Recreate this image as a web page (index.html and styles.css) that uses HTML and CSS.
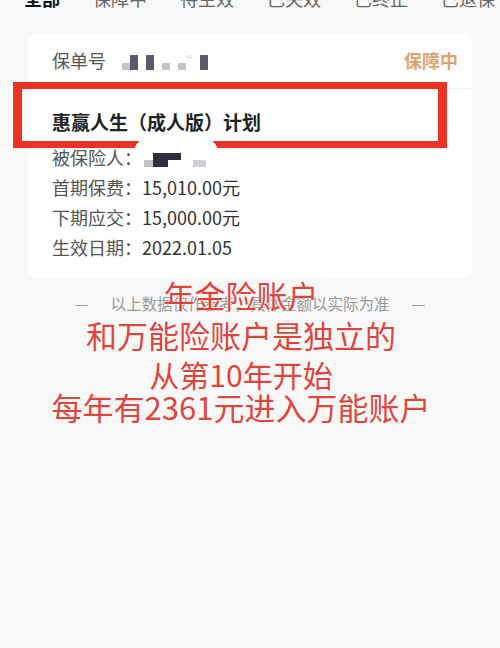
FILE: index.html
```html
<!DOCTYPE html>
<html lang="zh-CN">
<head>
    <meta charset="UTF-8">
    <meta name="viewport" content="width=device-width, initial-scale=1.0">
    <title>我的保单</title>
    <link rel="stylesheet" href="styles.css">
</head>
<body>
    <div class="tabs">
        <span class="tab active">全部</span>
        <span class="tab">保障中</span>
        <span class="tab">待生效</span>
        <span class="tab">已失效</span>
        <span class="tab">已终止</span>
        <span class="tab">已退保</span>
    </div>

    <div class="card">
        <div class="card-head">
            <div class="policy-no">
                <span class="label">保单号</span>
                <span class="mosaic">
                    <i class="px light short"></i>
                    <i class="px dark"></i>
                    <i class="px gap"></i>
                    <i class="px dark"></i>
                    <i class="px gap"></i>
                    <i class="px light short"></i>
                    <i class="px gap"></i>
                    <i class="px light short"></i>
                    <i class="px faint"></i>
                    <i class="px gap"></i>
                    <i class="px dark"></i>
                </span>
            </div>
            <span class="status">保障中</span>
        </div>

        <div class="plan">惠赢人生（成人版）计划</div>

        <div class="rows">
            <div class="row">
                <span class="label">被保险人：</span>
                <span class="mosaic name">
                    <i class="px light short"></i>
                    <i class="px dark mid"></i>
                    <i class="px dark top"></i>
                    <i class="px gap"></i>
                    <i class="px light short wide"></i>
                </span>
            </div>
            <div class="row"><span class="label">首期保费：</span><span class="value">15,010.00元</span></div>
            <div class="row"><span class="label">下期应交：</span><span class="value">15,000.00元</span></div>
            <div class="row"><span class="label">生效日期：</span><span class="value">2022.01.05</span></div>
        </div>
    </div>

    <p class="note"><span>—</span><span>以上数据仅作参考，具体金额以实际为准</span><span>—</span></p>

    <!-- annotations drawn on top of the screenshot -->
    <div class="mark"></div>
    <div class="blob"></div>
    <div class="remark">
        <div>年金险账户</div>
        <div>和万能险账户是独立的</div>
        <div class="third">从第10年开始</div>
        <div class="last">每年有2361元进入万能账户</div>
    </div>
</body>
</html>
```

FILE: styles.css
```css
body {
    margin: 0;
    background: #f8f8f8;
    font-family: "Noto Sans CJK SC", "Noto Sans", sans-serif;
    color: #333;
    position: relative;
    height: 648px;
    overflow: hidden;
}

.tabs {
    display: flex;
    gap: 33px;
    padding-left: 24px;
    margin-top: -14px;
    font-size: 18px;
    line-height: 24px;
    color: #666;
    white-space: nowrap;
}

.tab.active {
    color: #111;
    font-weight: bold;
}

.card {
    margin: 23px 28px 0;
    background: #fff;
    border-radius: 8px;
}

.card-head {
    display: flex;
    justify-content: space-between;
    align-items: center;
    padding: 15px 14px 15px 24px;
    border-bottom: 1px solid #f0f0f0;
    line-height: 25px;
}

.policy-no {
    display: flex;
    align-items: center;
}

.label {
    font-size: 18px;
    color: #555;
}

.status {
    font-size: 18px;
    font-weight: bold;
    color: #e0a36e;
}

.mosaic {
    display: flex;
    align-items: flex-end;
    height: 15px;
    margin-left: 16px;
    margin-top: 3px;
}

.px {
    display: block;
    width: 8px;
    height: 15px;
}

.px.dark { background: #5a5a6a; }
.px.light { background: #c4c4c8; }
.px.faint { background: #ececee; height: 4px; align-self: flex-start; width: 6px; }
.px.gap { width: 8px; }
.px.short { height: 7px; }

.plan {
    padding: 20px 24px 7px;
    font-size: 19px;
    font-weight: bold;
    line-height: 26px;
    color: #222;
}

.rows {
    padding: 0 24px 16px;
}

.row {
    display: flex;
    align-items: center;
    line-height: 30px;
    font-size: 18px;
}

.value {
    color: #333;
}

.mosaic.name {
    position: relative;
    z-index: 1;
    margin-left: 2px;
    height: 14px;
    margin-top: 6px;
}

.mosaic.name .px { width: 9px; }
.mosaic.name .dark { background: #2e2e40; }
.mosaic.name .mid { height: 14px; width: 15px; }
.mosaic.name .top { height: 7px; align-self: flex-start; width: 13px; }
.mosaic.name .gap { width: 12px; }
.mosaic.name .wide { width: 13px; background: #d0d0d4; }

.note {
    display: flex;
    justify-content: center;
    gap: 22px;
    margin: 15px 0 0;
    font-size: 15.5px;
    line-height: 20px;
    color: #999;
}

.mark {
    position: absolute;
    left: 13px;
    top: 82px;
    width: 434px;
    height: 66px;
    box-sizing: border-box;
    border: 7px solid #ea3323;
    border-left-width: 9px;
    border-right-width: 9px;
}

.blob {
    position: absolute;
    left: 134px;
    top: 137px;
    width: 84px;
    height: 20px;
    background: #fff;
    border-radius: 40px 40px 10px 10px;
}

.remark {
    position: absolute;
    left: 0;
    right: 18px;
    top: 275px;
    text-align: center;
    font-size: 31px;
    line-height: 40px;
    color: #e0453b;
    text-shadow: 0 0 2px #fff, 0 0 1px #fff;
}

.remark .third {
    font-size: 30px;
    margin-top: -1px;
}

.remark .last {
    margin-top: -7px;
    font-size: 31px;
}
```
